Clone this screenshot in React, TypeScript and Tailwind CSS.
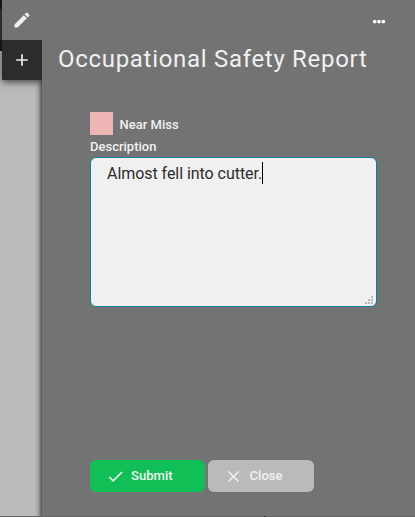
import React from "react";

function RailTabs() {
  return (
    <div className="relative ml-[2px] w-10 shadow-[0_2px_7px_rgba(0,0,0,0.65)]">
      <button className="flex h-10 w-10 items-center justify-center bg-[#737373]" aria-label="Edit">
        <svg width="20" height="20" viewBox="0 0 24 24" fill="#f0f0f0">
          <path d="M3 17.25V21h3.75L17.81 9.94l-3.75-3.75L3 17.25zM20.71 7.04a1 1 0 0 0 0-1.41l-2.34-2.34a1 1 0 0 0-1.41 0l-1.83 1.83 3.75 3.75 1.83-1.83z" />
        </svg>
      </button>
      <button className="flex h-10 w-10 items-center justify-center bg-[#2c2c2c]" aria-label="Add">
        <svg width="20" height="20" viewBox="0 0 24 24" fill="#f0f0f0">
          <path d="M19 13h-6v6h-2v-6H5v-2h6V5h2v6h6v2z" />
        </svg>
      </button>
    </div>
  );
}

function Rail() {
  return (
    <div className="relative w-[42px] shrink-0 overflow-hidden bg-[#bababa]">
      <div className="absolute left-0 top-0 h-[51px] w-[8px] bg-[#1a1a1a] pt-[9px]">
        <div className="h-[31px] bg-[#3a3a3a]" />
      </div>
      <div className="absolute inset-y-0 right-0 w-[7px] bg-linear-to-r from-transparent via-black/15 to-black/55" />
      <RailTabs />
    </div>
  );
}

function ResizeGrip() {
  return (
    <svg className="absolute bottom-[2px] right-[3px]" width="8" height="8" fill="#bababa" shapeRendering="crispEdges">
      <path d="M6 0h2v2h-2zM3 3h2v2h-2zM6 3h2v2h-2zM0 6h2v2h-2zM3 6h2v2h-2zM6 6h2v2h-2z" />
    </svg>
  );
}

export default function App() {
  return (
    <div className="flex h-[517px] w-[415px] flex-col overflow-hidden bg-[#737373] font-[Roboto,sans-serif] text-[#f0f0f0]">
      <div className="flex min-h-0 flex-1">
        <Rail />
        <main className="flex min-w-0 flex-1 flex-col">
          <div className="flex h-[42px] justify-end pr-[29px] pt-[19px]">
            <svg width="14" height="5" viewBox="0 0 14 5" fill="#ffffff">
              <rect x="1" y="1" width="3.4" height="3.2" rx="1" />
              <rect x="5.3" y="1" width="3.4" height="3.2" rx="1" />
              <rect x="9.6" y="1" width="3.4" height="3.2" rx="1" />
            </svg>
          </div>
          <h1 className="whitespace-nowrap pl-4 text-2xl leading-[34px] tracking-[0.7px]">
            Occupational Safety Report
          </h1>
          <form className="flex flex-1 flex-col pl-12 pt-9">
            <label className="flex h-[23px] items-center">
              <span className="h-[23px] w-[23px] bg-[#edb6b4]" />
              <span className="ml-[6.5px] pt-[2px] text-[13px] font-medium leading-5">Near Miss</span>
            </label>
            <span className="mt-px text-[13px] font-medium leading-[21px]">Description</span>
            <div className="relative h-[150px] w-[287px] rounded-[6px] border border-[#088299] bg-[#f0f0f0] pl-4 pt-[4px]">
              <div className="flex items-center">
                <span className="pt-[2px] text-base leading-[20px] tracking-[-0.05px] text-[#2c2c2c]">Almost fell into cutter.</span>
                <span className="h-[22px] w-px bg-black" />
              </div>
              <ResizeGrip />
            </div>
            <div className="mt-[153px] flex gap-[3px] text-[13px] font-medium tracking-[0.05px]">
              <button type="button" className="flex h-8 w-[115px] items-center rounded-[6px] bg-[#11bf57] pl-4">
                <svg width="19" height="19" viewBox="0 0 24 24" fill="#f0f0f0">
                  <path d="M9 16.17 4.83 12l-1.42 1.41L9 19 21 7l-1.41-1.41z" />
                </svg>
                <span className="ml-[6px]">Submit</span>
              </button>
              <button type="button" className="flex h-8 w-[106px] items-center rounded-[6px] bg-[#bababa] pl-4">
                <svg width="19" height="19" viewBox="0 0 24 24" fill="#f0f0f0">
                  <path d="M19 6.41 17.59 5 12 10.59 6.41 5 5 6.41 10.59 12 5 17.59 6.41 19 12 13.41 17.59 19 19 17.59 13.41 12z" />
                </svg>
                <span className="ml-[6.5px]">Close</span>
              </button>
            </div>
          </form>
        </main>
      </div>
      <div className="h-px bg-[#686466] pl-[264px]">
        <div className="h-px w-[2px] bg-[#3a3838]" />
      </div>
    </div>
  );
}
